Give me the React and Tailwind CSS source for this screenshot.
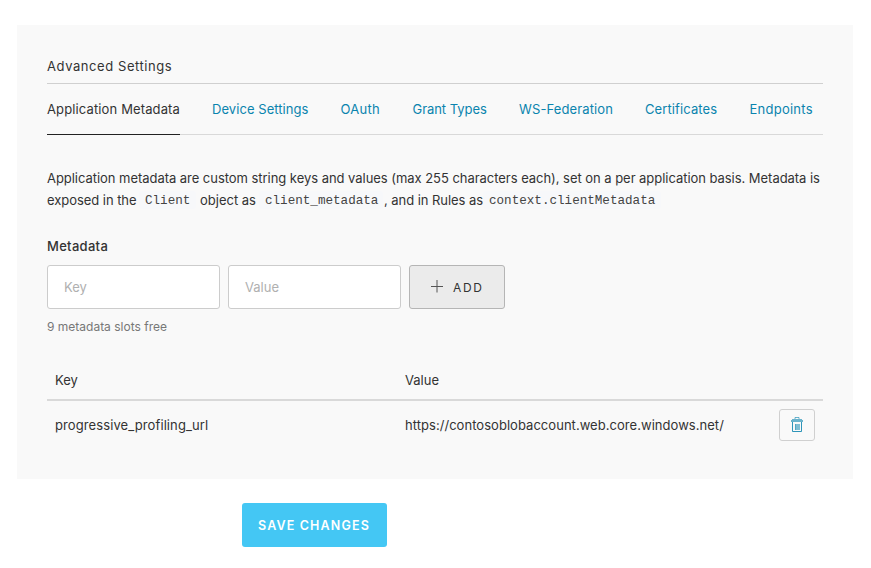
const tabs = [
  { label: 'Application Metadata', style: 'w-[133px] text-[#333] tracking-[0.13px]', active: true },
  { label: 'Device Settings', style: 'w-[96.5px] text-[#0a84ae] tracking-[0.06px]' },
  { label: 'OAuth', style: 'w-[40px] text-[#0a84ae] tracking-[0.3px]' },
  { label: 'Grant Types', style: 'w-[74.5px] text-[#0a84ae] tracking-[-0.05px]' },
  { label: 'WS-Federation', style: 'w-[94px] text-[#0a84ae] tracking-[0.12px]' },
  { label: 'Certificates', style: 'w-[72.5px] text-[#0a84ae] tracking-[0.1px]' },
  { label: 'Endpoints', style: 'w-[64px] text-[#0a84ae] tracking-[0.25px]' },
];

function Code({ children, className }) {
  return (
    <code
      className={`h-[18px] rounded-[3px] bg-[#f7f8fa] font-['Liberation_Mono',monospace] text-[12.6px] leading-[21px] text-[#444] ${className}`}
    >
      {children}
    </code>
  );
}

function TrashIcon() {
  return (
    <svg width="12" height="15" viewBox="0 0 12 15" fill="none" stroke="#0a84ae">
      <path d="M4 2V.5h4V2" strokeOpacity=".6" />
      <path d="M0 3h12v2H0z M1 2h10v1H1z" fill="#0a84ae" fillOpacity=".6" stroke="none" />
      <path d="M1.5 5v9.5h9V5" strokeOpacity=".85" />
      <path d="M4 7h5v6H4z" fill="#0a84ae" fillOpacity=".5" stroke="none" />
      <path d="M4.5 7v6" strokeOpacity=".4" />
    </svg>
  );
}

export default function App() {
  return (
    <div className="h-[568px] w-[871px] overflow-hidden bg-white pt-[25px] font-['Inter',sans-serif] text-[13px] leading-[22px] text-[#333]">
      <section className="ml-[17px] h-[454px] w-[836px] bg-[#f9f9f9] pl-[30px] pr-[30px] pt-[30px]">
        <h2 className="h-[29px] border-b border-[#d0d0d0] whitespace-nowrap text-[13px] tracking-[0.57px]">
          Advanced Settings
        </h2>
        <nav className="flex h-[51px] gap-8 border-b border-[#d9d9d9]">
          {tabs.map((tab) => (
            <a
              key={tab.label}
              className={`h-[51px] shrink-0 whitespace-nowrap pt-[14px] ${tab.style} ${tab.active ? 'border-b border-[#222]' : ''}`}
            >
              {tab.label}
            </a>
          ))}
        </nav>
        <div className="mt-[32px] whitespace-nowrap">
          <p className="h-[22px] tracking-[-0.042px]">
            Application metadata are custom string keys and values (max 255 characters each), set on a per application basis. Metadata is
          </p>
          <div className="flex h-[22px] items-center">
            <span className="w-[92px] tracking-[-0.05px]">exposed in the</span>
            <Code className="w-[57px] pl-[6px]">Client</Code>
            <span className="w-[60px] pl-[4px]">object as</span>
            <Code className="ml-[3px] w-[124px] pl-[6px]">client_metadata</Code>
            <span className="w-[100px] pl-[1px] tracking-[-0.05px]">, and in Rules as</span>
            <Code className="w-[178px] pl-[6px]">context.clientMetadata</Code>
          </div>
        </div>
        <h3 className="mt-[24px] h-[22px] font-medium tracking-[0.3px]">Metadata</h3>
        <div className="mt-[8px] flex h-[44px] gap-2">
          <div className="flex w-[173px] items-center rounded-[3px] border border-[#ccc] bg-white pl-4 text-[#b0b0b0]">Key</div>
          <div className="flex w-[173px] items-center rounded-[3px] border border-[#ccc] bg-white pl-4 text-[#b0b0b0]">Value</div>
          <button className="flex w-[96px] items-center rounded-[3px] border border-[#b5b5b5] bg-[#ebebeb] pl-[21px]">
            <svg width="12" height="13" viewBox="0 0 12 13" className="mb-px mr-[10px]" stroke="#555">
              <path d="M6 0v12.5M0 6.5h12" />
            </svg>
            <span className="pt-[2px] text-[12px] tracking-[1.7px]">ADD</span>
          </button>
        </div>
        <p className="mt-[7px] h-[22px] text-[12px] text-[#777]">9 metadata slots free</p>
        <div className="mt-[31px] flex h-[32px] border-b-2 border-[#d9d9d9] pl-2">
          <span className="w-[350px]">Key</span>
          <span>Value</span>
        </div>
        <div className="flex h-[48px] items-center whitespace-nowrap pl-2">
          <span className="w-[350px] tracking-[0.1px]">progressive_profiling_url</span>
          <span className="w-[374px] tracking-[0.04px]">https://contosoblobaccount.web.core.windows.net/</span>
          <button className="flex h-8 w-9 items-center justify-center rounded-[3px] border border-[#d0d0d0] pb-px">
            <TrashIcon />
          </button>
        </div>
      </section>
      <button className="ml-[242px] mt-[24px] flex h-[44px] w-[145px] items-center whitespace-nowrap rounded-[3px] bg-[#44c7f4] pl-4 pt-[2px] text-[12.5px] font-semibold tracking-[1.15px] text-white">
        SAVE CHANGES
      </button>
    </div>
  );
}
